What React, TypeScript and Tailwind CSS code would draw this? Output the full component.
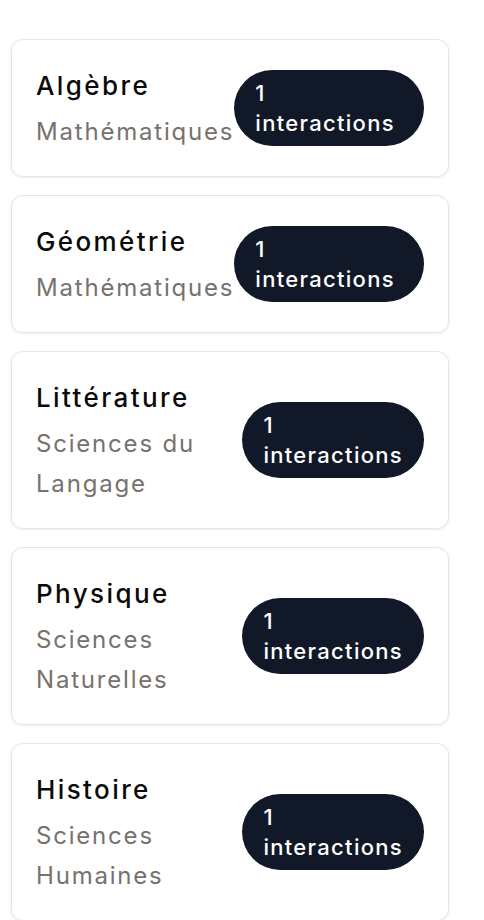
import React from 'react';

interface Subject {
  name: string;
  domain: string;
  count: number;
}

const SUBJECTS: Subject[] = [
  { name: 'Algèbre', domain: 'Mathématiques', count: 1 },
  { name: 'Géométrie', domain: 'Mathématiques', count: 1 },
  { name: 'Littérature', domain: 'Sciences du Langage', count: 1 },
  { name: 'Physique', domain: 'Sciences Naturelles', count: 1 },
  { name: 'Histoire', domain: 'Sciences Humaines', count: 1 },
];

const SubjectCard: React.FC<{ subject: Subject }> = ({ subject }) => (
  <div className="flex items-center justify-between rounded-xl border border-[#e5e5e5] bg-white p-6 shadow-[0_1px_3px_rgba(0,0,0,0.08)]">
    <div>
      <h3 className="text-[26px] leading-[44px] font-medium tracking-[2.4px] text-[#0a0a0a]">{subject.name}</h3>
      <p className="mt-1 text-[24px] leading-[40px] tracking-[1.8px] text-[#78716c]">{subject.domain}</p>
    </div>
    <span className="relative rounded-full bg-[#111827] px-[21px] py-2 text-[22px] leading-[30px] font-medium tracking-[1.3px] text-white">
      {subject.count} interactions
    </span>
  </div>
);

export default function App() {
  return (
    <div className="min-h-screen bg-white pl-[11px] pr-[35px] pt-[39px] pb-6" style={{ fontFamily: 'Inter, "Noto Sans", sans-serif' }}>
      <div className="flex flex-col gap-[18px]">
        {SUBJECTS.map(s => (
          <SubjectCard key={s.name} subject={s} />
        ))}
      </div>
    </div>
  );
}
